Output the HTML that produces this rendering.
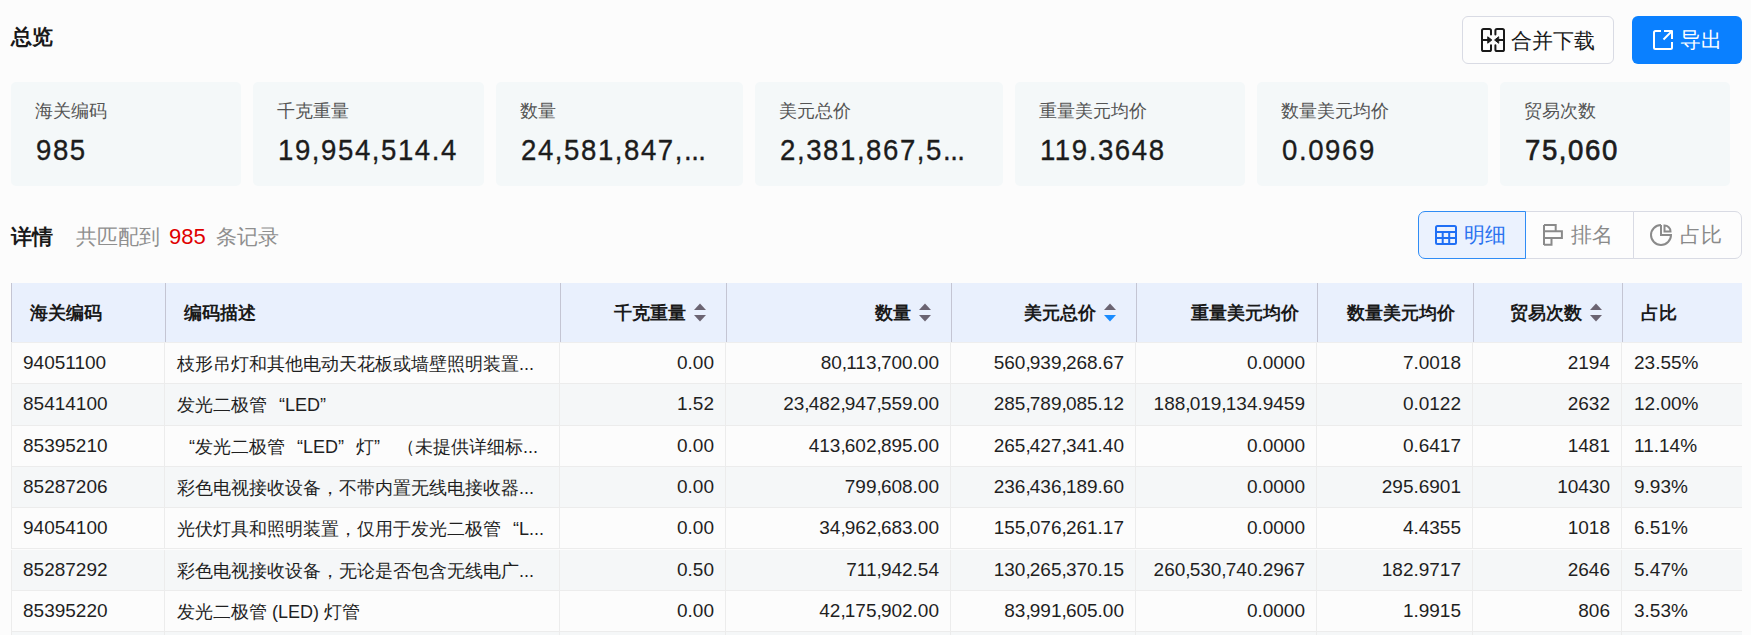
<!DOCTYPE html>
<html><head><meta charset="utf-8">
<style>
*{box-sizing:border-box;margin:0;padding:0}
html,body{width:1751px;height:635px;overflow:hidden;background:#fcfcfc;font-family:"Liberation Sans",sans-serif;color:#1f1f1f}
.abs{position:absolute}
.title{left:11px;top:22px;font-size:21px;font-weight:bold;line-height:30px;color:#1a1a1a}
.btn{top:16px;height:48px;border-radius:6px;font-size:21px;line-height:46px}
.btn1{left:1462px;width:152px;border:1px solid #d9dbe4;background:#fdfdfd;color:#1a1a1a}
.btn2{left:1632px;width:110px;background:#0a80ff;color:#fff}
.btn svg{position:absolute}
.btn span{position:absolute;top:0}
.card{top:82px;height:104px;background:#f4f8f9;border-radius:5px}
.card .lb{position:absolute;left:24px;top:17px;font-size:18px;line-height:24px;color:#555}
.card .vl{position:absolute;left:25px;top:50px;font-size:30px;line-height:36px;color:#1c1c1c;letter-spacing:1.7px;-webkit-text-stroke:0.35px #1c1c1c;transform:scaleX(0.92);transform-origin:0 0;white-space:nowrap}
.sub{left:11px;top:222px;font-size:21px;font-weight:bold;line-height:30px;color:#1a1a1a}
.cnt{left:76px;top:222px;font-size:21px;line-height:30px;color:#8f8f8f}
.cnt b{font-weight:normal;color:#e00000;margin:0 10px 0 9px;font-size:22px}
.seg{top:211px;height:48px;border:1px solid #d9dbe4;font-size:21px;line-height:46px;color:#8a8a8a;background:#fdfdfd}
.seg svg{position:absolute}
.seg span{position:absolute;top:0}
.thead{left:11px;top:283px;width:1731px;height:60px;background:#e9f0fd;border-bottom:1px solid #eeeeee}
.th{position:absolute;top:0;height:59px;line-height:60px;font-size:17.5px;font-weight:bold;color:#1a1a1a;border-left:1px solid #c4c5d3;white-space:nowrap}
.th.l{padding-left:18px}
.th.r{text-align:right;padding-right:18px}
.th.s{padding-right:20px}
.so{display:inline-block;width:12px;height:19px;margin-left:8px;vertical-align:middle;position:relative;top:-2px}
.so svg{display:block}
.tr{left:11px;width:1731px;height:41.3px;background:#fcfcfc;border-bottom:1px solid #ececec}
.tr.alt{background:#f5f7f8}
.td{position:absolute;top:0;height:41.3px;line-height:40px;font-size:18px;color:#1f1f1f;white-space:nowrap;overflow:visible}
.td::before{content:"";position:absolute;left:-1px;top:0;bottom:0;border-left:1px solid #ececec}
.td:first-child::before{left:0}
.td.l{padding-left:12px}
.cm{font-weight:normal;letter-spacing:-0.9px}
.qo,.qc{display:inline-block;width:18px}.qo{text-align:right}.qc{text-align:left}
.td{font-size:19px}.td.d{font-size:18px;line-height:42px}
.td.r{text-align:right;padding-right:12px}
</style></head><body>
<div class="abs title">总览</div>

<div class="abs btn btn1">
<svg style="left:18px;top:11px" width="24" height="24" viewBox="0 0 24 24" fill="none" stroke="#1a1a1a" stroke-width="2" stroke-linejoin="round" stroke-linecap="round">
<path d="M10 6.6V2.6Q10 1 8.4 1H2.6Q1 1 1 2.6V21.4Q1 23 2.6 23H8.4Q10 23 10 21.4V17.2"/><path d="M14.4 6.6V2.6Q14.4 1 16 1H21.4Q23 1 23 2.6V21.4Q23 23 21.4 23H16Q14.4 23 14.4 21.4V17.2"/>
<path d="M1 12H8"/><path d="M23 12H16.4"/>
<path d="M7 9L10.8 12L7 15Z" fill="#1a1a1a" stroke-width="1"/><path d="M17.4 9L13.6 12L17.4 15Z" fill="#1a1a1a" stroke-width="1"/>
</svg>
<span style="left:48px;top:1px">合并下载</span>
</div>
<div class="abs btn btn2">
<svg style="left:21px;top:14px" width="20" height="20" viewBox="0 0 20 20" fill="none" stroke="#fff" stroke-width="2" stroke-linejoin="round">
<path d="M8 1H2.5Q1 1 1 2.5V17.5Q1 19 2.5 19H17.5Q19 19 19 17.5V12"/><path d="M11 1H19V9"/><path d="M19 1L10.5 9.5"/>
</svg>
<span style="left:48px;top:1px">导出</span>
</div>

<div class="abs card" style="left:11px;width:230px"><div class="lb">海关编码</div><div class="vl">985</div></div>
<div class="abs card" style="left:253px;width:231px"><div class="lb">千克重量</div><div class="vl">19,954,514.4</div></div>
<div class="abs card" style="left:496px;width:247px"><div class="lb">数量</div><div class="vl">24,581,847,<span style="letter-spacing:-0.6px">...</span></div></div>
<div class="abs card" style="left:755px;width:248px"><div class="lb">美元总价</div><div class="vl">2,381,867,5<span style="letter-spacing:-0.6px">...</span></div></div>
<div class="abs card" style="left:1015px;width:230px"><div class="lb">重量美元均价</div><div class="vl">119.3648</div></div>
<div class="abs card" style="left:1257px;width:231px"><div class="lb">数量美元均价</div><div class="vl">0.0969</div></div>
<div class="abs card" style="left:1500px;width:230px"><div class="lb">贸易次数</div><div class="vl" style="-webkit-text-stroke:0.7px #1c1c1c">75,060</div></div>

<div class="abs sub">详情</div>
<div class="abs cnt">共匹配到<b>985</b>条记录</div>

<div class="abs seg" style="left:1418px;width:108px;border-color:#2f8cf5;background:#ebf2fe;color:#2a72f0;border-radius:7px 0 0 7px;z-index:2">
<svg style="left:16px;top:13px" width="22" height="20" viewBox="0 0 22 20" fill="none" stroke="#1f6ff5" stroke-width="2"><rect x="1" y="1" width="20" height="18" rx="1.5"/><path d="M1 7H21M1 13H21M7.7 7V19M14.2 7V19"/></svg>
<span style="left:45px">明细</span>
</div>
<div class="abs seg" style="left:1525px;width:109px;border-left:none">
<svg style="left:18px;top:12px" width="20" height="22" viewBox="0 0 20 22" fill="none" stroke="#8a8a8a" stroke-width="2"><path d="M1 1V21M1 1H12.7V7.3H1M1 7.3H18.9V14H1M1 14H8.5V20.8H1"/></svg>
<span style="left:46px">排名</span>
</div>
<div class="abs seg" style="left:1633px;width:109px;border-radius:0 7px 7px 0">
<svg style="left:16px;top:12px" width="22" height="22" viewBox="0 0 22 22" fill="none" stroke="#8a8a8a" stroke-width="2"><path d="M11 1V11H21A10 10 0 1 1 11 1"/><path d="M14.5 1.5V7.5H20.5A6 6 0 0 0 14.5 1.5Z"/></svg>
<span style="left:46px">占比</span>
</div>

<div class="abs thead">
<div class="th l" style="left:0px;width:154px">海关编码</div>
<div class="th l" style="left:154px;width:395px">编码描述</div>
<div class="th r s" style="left:549px;width:166px">千克重量<i class="so"><svg width="12" height="19" viewBox="0 0 12 19"><path d="M6 0.5L12 7H0Z" fill="#6b6472"/><path d="M0 12H12L6 18.5Z" fill="#6b6472"/></svg></i></div>
<div class="th r s" style="left:715px;width:225px">数量<i class="so"><svg width="12" height="19" viewBox="0 0 12 19"><path d="M6 0.5L12 7H0Z" fill="#6b6472"/><path d="M0 12H12L6 18.5Z" fill="#6b6472"/></svg></i></div>
<div class="th r s" style="left:940px;width:185px">美元总价<i class="so"><svg width="12" height="19" viewBox="0 0 12 19"><path d="M6 0.5L12 7H0Z" fill="#6b6472"/><path d="M0 12H12L6 18.5Z" fill="#1a8cff"/></svg></i></div>
<div class="th r" style="left:1125px;width:181px">重量美元均价</div>
<div class="th r" style="left:1306px;width:156px">数量美元均价</div>
<div class="th r s" style="left:1462px;width:149px">贸易次数<i class="so"><svg width="12" height="19" viewBox="0 0 12 19"><path d="M6 0.5L12 7H0Z" fill="#6b6472"/><path d="M0 12H12L6 18.5Z" fill="#6b6472"/></svg></i></div>
<div class="th l" style="left:1611px;width:120px">占比</div>
</div>
<div class="abs tr" style="top:343.0px">
<div class="td l" style="left:0px;width:154px">94051100</div>
<div class="td l d" style="left:154px;width:395px">枝形吊灯和其他电动天花板或墙壁照明装置...</div>
<div class="td r" style="left:549px;width:166px">0.00</div>
<div class="td r" style="left:715px;width:225px">80<b class="cm">,</b>113<b class="cm">,</b>700.00</div>
<div class="td r" style="left:940px;width:185px">560<b class="cm">,</b>939<b class="cm">,</b>268.67</div>
<div class="td r" style="left:1125px;width:181px">0.0000</div>
<div class="td r" style="left:1306px;width:156px">7.0018</div>
<div class="td r" style="left:1462px;width:149px">2194</div>
<div class="td l" style="left:1611px;width:120px">23.55%</div>
</div>
<div class="abs tr alt" style="top:384.3px">
<div class="td l" style="left:0px;width:154px">85414100</div>
<div class="td l d" style="left:154px;width:395px">发光二极管<span class="qo">“</span>LED<span class="qc">”</span></div>
<div class="td r" style="left:549px;width:166px">1.52</div>
<div class="td r" style="left:715px;width:225px">23<b class="cm">,</b>482<b class="cm">,</b>947<b class="cm">,</b>559.00</div>
<div class="td r" style="left:940px;width:185px">285<b class="cm">,</b>789<b class="cm">,</b>085.12</div>
<div class="td r" style="left:1125px;width:181px">188<b class="cm">,</b>019<b class="cm">,</b>134.9459</div>
<div class="td r" style="left:1306px;width:156px">0.0122</div>
<div class="td r" style="left:1462px;width:149px">2632</div>
<div class="td l" style="left:1611px;width:120px">12.00%</div>
</div>
<div class="abs tr" style="top:425.6px">
<div class="td l" style="left:0px;width:154px">85395210</div>
<div class="td l d" style="left:154px;width:395px"><span class="qo">“</span>发光二极管<span class="qo">“</span>LED<span class="qc">”</span>灯<span class="qc">”</span> （未提供详细标...</div>
<div class="td r" style="left:549px;width:166px">0.00</div>
<div class="td r" style="left:715px;width:225px">413<b class="cm">,</b>602<b class="cm">,</b>895.00</div>
<div class="td r" style="left:940px;width:185px">265<b class="cm">,</b>427<b class="cm">,</b>341.40</div>
<div class="td r" style="left:1125px;width:181px">0.0000</div>
<div class="td r" style="left:1306px;width:156px">0.6417</div>
<div class="td r" style="left:1462px;width:149px">1481</div>
<div class="td l" style="left:1611px;width:120px">11.14%</div>
</div>
<div class="abs tr alt" style="top:466.9px">
<div class="td l" style="left:0px;width:154px">85287206</div>
<div class="td l d" style="left:154px;width:395px">彩色电视接收设备，不带内置无线电接收器...</div>
<div class="td r" style="left:549px;width:166px">0.00</div>
<div class="td r" style="left:715px;width:225px">799<b class="cm">,</b>608.00</div>
<div class="td r" style="left:940px;width:185px">236<b class="cm">,</b>436<b class="cm">,</b>189.60</div>
<div class="td r" style="left:1125px;width:181px">0.0000</div>
<div class="td r" style="left:1306px;width:156px">295.6901</div>
<div class="td r" style="left:1462px;width:149px">10430</div>
<div class="td l" style="left:1611px;width:120px">9.93%</div>
</div>
<div class="abs tr" style="top:508.2px">
<div class="td l" style="left:0px;width:154px">94054100</div>
<div class="td l d" style="left:154px;width:395px">光伏灯具和照明装置，仅用于发光二极管<span class="qo">“</span>L...</div>
<div class="td r" style="left:549px;width:166px">0.00</div>
<div class="td r" style="left:715px;width:225px">34<b class="cm">,</b>962<b class="cm">,</b>683.00</div>
<div class="td r" style="left:940px;width:185px">155<b class="cm">,</b>076<b class="cm">,</b>261.17</div>
<div class="td r" style="left:1125px;width:181px">0.0000</div>
<div class="td r" style="left:1306px;width:156px">4.4355</div>
<div class="td r" style="left:1462px;width:149px">1018</div>
<div class="td l" style="left:1611px;width:120px">6.51%</div>
</div>
<div class="abs tr alt" style="top:549.5px">
<div class="td l" style="left:0px;width:154px">85287292</div>
<div class="td l d" style="left:154px;width:395px">彩色电视接收设备，无论是否包含无线电广...</div>
<div class="td r" style="left:549px;width:166px">0.50</div>
<div class="td r" style="left:715px;width:225px">711<b class="cm">,</b>942.54</div>
<div class="td r" style="left:940px;width:185px">130<b class="cm">,</b>265<b class="cm">,</b>370.15</div>
<div class="td r" style="left:1125px;width:181px">260<b class="cm">,</b>530<b class="cm">,</b>740.2967</div>
<div class="td r" style="left:1306px;width:156px">182.9717</div>
<div class="td r" style="left:1462px;width:149px">2646</div>
<div class="td l" style="left:1611px;width:120px">5.47%</div>
</div>
<div class="abs tr" style="top:590.8px">
<div class="td l" style="left:0px;width:154px">85395220</div>
<div class="td l d" style="left:154px;width:395px">发光二极管 (LED) 灯管</div>
<div class="td r" style="left:549px;width:166px">0.00</div>
<div class="td r" style="left:715px;width:225px">42<b class="cm">,</b>175<b class="cm">,</b>902.00</div>
<div class="td r" style="left:940px;width:185px">83<b class="cm">,</b>991<b class="cm">,</b>605.00</div>
<div class="td r" style="left:1125px;width:181px">0.0000</div>
<div class="td r" style="left:1306px;width:156px">1.9915</div>
<div class="td r" style="left:1462px;width:149px">806</div>
<div class="td l" style="left:1611px;width:120px">3.53%</div>
</div>
<div class="abs tr alt" style="top:632.1px">
<div class="td l" style="left:0px;width:154px"></div>
<div class="td l d" style="left:154px;width:395px"></div>
<div class="td r" style="left:549px;width:166px"></div>
<div class="td r" style="left:715px;width:225px"></div>
<div class="td r" style="left:940px;width:185px"></div>
<div class="td r" style="left:1125px;width:181px"></div>
<div class="td r" style="left:1306px;width:156px"></div>
<div class="td r" style="left:1462px;width:149px"></div>
<div class="td l" style="left:1611px;width:120px"></div>
</div>
</body></html>
